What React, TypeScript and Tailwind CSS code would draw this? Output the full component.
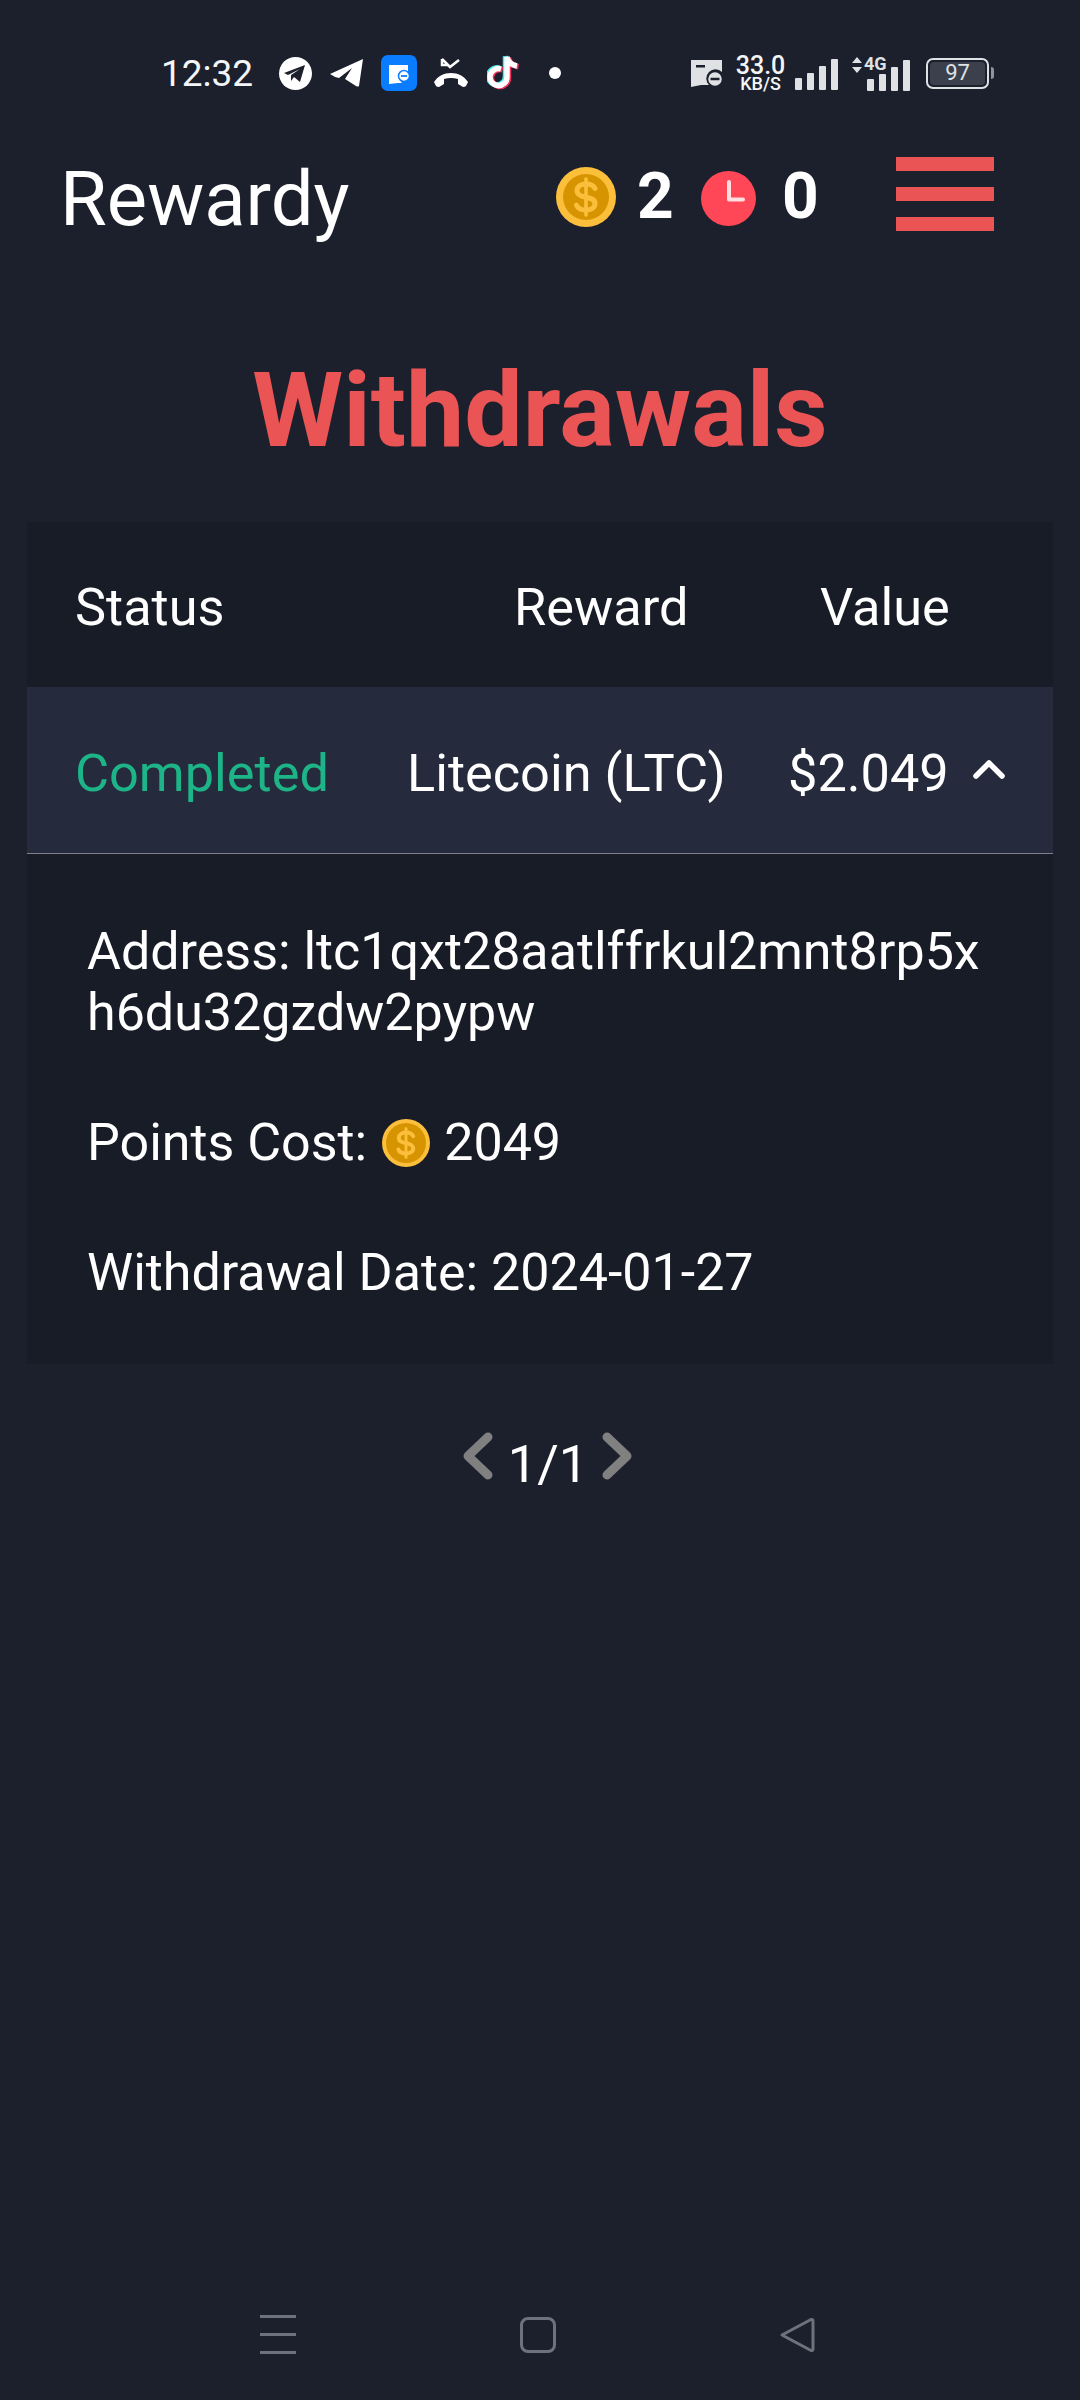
import React from "react";

const Coin = ({ size, ring = 7 }: { size: number; ring?: number }) => (
  <svg width={size} height={size} viewBox="0 0 60 60" className="shrink-0">
    <circle cx="30" cy="30" r="30" fill="#fbbf3c" />
    <circle cx="30" cy="30" r={30 - ring} fill="#d69500" />
    <path d="M39 21.500c-1.500-3-5-4.500-9-4.500-5 0-9 2.500-9 6.700 0 4.300 4 5.600 9 6.500 5 1 9 2.200 9 6.400 0 4.300-4 6.400-9 6.400-4.300 0-8-1.600-9.500-4.800" fill="none" stroke="#fbbf3c" strokeWidth="5" strokeLinecap="round" />
    <path d="M30 12v36" stroke="#fbbf3c" strokeWidth="3.600" strokeLinecap="round" />
  </svg>
);

const Clock = () => (
  <svg width="55" height="55" viewBox="0 0 55 55" className="shrink-0">
    <circle cx="27.500" cy="27.500" r="27.500" fill="#ff4757" />
    <path d="M28 11v17.500h14" fill="none" stroke="#ffdfe0" strokeWidth="4" strokeLinecap="round" strokeLinejoin="round" />
  </svg>
);

const StatusLeft = () => (
  <div className="flex items-center">
    <span className="text-[37px] leading-none text-[#f4f5f6] ml-[161px] w-[100px]">12:32</span>
    <svg width="33" height="33" viewBox="0 0 33 33" className="ml-[18px]">
      <circle cx="16.500" cy="16.500" r="16.500" fill="#fff" />
      <path d="M5 16 L26 8 L21 25 L15 20 L12 24 L12 18 L21 12 L9 18 Z" fill="#1c202d" />
    </svg>
    <svg width="33" height="28" viewBox="0 0 33 28" className="ml-[18px]">
      <path d="M0 15 L33 0 L29 27 Q28 28 26 27 L15 20 L22 9 L9 19 Q4 18 0 15 Z" fill="#fff" />
    </svg>
    <svg width="36" height="36" viewBox="0 0 36 36" className="ml-[18px]">
      <rect width="36" height="36" rx="7" fill="#0a7cff" />
      <path d="M8 10h19v8h-1a6 6 0 0 0-5 10l-4 0-9 1z" fill="#fff" />
      <circle cx="23" cy="21" r="5.500" fill="#fff" stroke="#0a7cff" strokeWidth="1.500" />
      <path d="M20 21h6" stroke="#0a7cff" strokeWidth="1.800" />
    </svg>
    <svg width="36" height="32" viewBox="0 0 36 32" className="ml-[16px]">
      <path d="M9 2l8 8 9-7" fill="none" stroke="#fff" strokeWidth="2.500" />
      <path d="M9 2v6h6" fill="none" stroke="#fff" strokeWidth="2.500" />
      <path d="M1 25c4-6 10-9 17-9s13 3 17 9l-2 4q-1 1-3 1l-5-3v-5q-7-2-14 0v5l-5 3q-2 0-3-1z" fill="#fff" />
    </svg>
    <svg width="32" height="36" viewBox="0 0 32 36" className="ml-[18px]">
      <g fill="none" strokeWidth="5.500">
        <path d="M14 14a8.500 8.500 0 1 0 6 8V2c1 5 4 8 10 9" stroke="#4de8ee" transform="translate(-1.500 -0.800)" />
        <path d="M14 14a8.500 8.500 0 1 0 6 8V2c1 5 4 8 10 9" stroke="#f5305a" transform="translate(1.500 0.800)" />
        <path d="M14 14a8.500 8.500 0 1 0 6 8V2c1 5 4 8 10 9" stroke="#fff" />
      </g>
    </svg>
    <span className="ml-[30px] w-[12px] h-[12px] rounded-full bg-white" />
  </div>
);

const Bars = () => (
  <svg width="43" height="31" viewBox="0 0 43 31" className="block">
    <rect x="0" y="19" width="7" height="12" rx="1" fill="#dfe1e4" />
    <rect x="12" y="14" width="7" height="17" rx="1" fill="#dfe1e4" />
    <rect x="24" y="7" width="7" height="24" rx="1" fill="#dfe1e4" />
    <rect x="36" y="0" width="7" height="31" rx="1" fill="#dfe1e4" />
  </svg>
);

const StatusRight = () => (
  <div className="flex items-center">
    <svg width="34" height="28" viewBox="0 0 34 28">
      <path d="M1 1h31v12a9 9 0 0 0-13 13l-8 0-10 2z" fill="#dfe1e4" />
      <rect x="6" y="6" width="9" height="2.500" fill="#1c202d" />
      <circle cx="25" cy="20" r="7.500" fill="#dfe1e4" stroke="#1c202d" strokeWidth="1.500" />
      <path d="M20.500 20h9" stroke="#1c202d" strokeWidth="2.500" />
    </svg>
    <div className="ml-[12px] w-[49px] flex flex-col items-center text-[#f4f5f6] font-medium">
      <span className="text-[25px] leading-[21px]">33.0</span>
      <span className="text-[18px] leading-[16px]">KB/S</span>
    </div>
    <div className="ml-[10px] mt-[3px] flex"><Bars /></div>
    <div className="ml-[13px] mt-[-1px] relative w-[59px] h-[33px]">
      <svg width="12" height="17" viewBox="0 0 12 17" className="absolute left-0 top-[1px]">
        <path d="M6 0l5 6H1zM6 16l5-6H1z" fill="#dfe1e4" />
      </svg>
      <div className="absolute left-[16px] top-[4px]"><Bars /></div>
      <span className="absolute left-[13px] top-[-1px] text-[18px] leading-[18px] font-bold text-[#dfe1e4] bg-[#1c202d] pr-[1px]">4G</span>
    </div>
    <div className="ml-[16px] w-[63px] h-[31px] rounded-[7px] border-[2px] border-[#dfe1e4] p-[2px]">
      <div className="h-full rounded-[4px] bg-[#3c404d] flex items-center justify-center text-[22px] leading-none text-[#dfe1e4]">97</div>
    </div>
    <span className="ml-[2px] w-[3px] h-[12px] rounded-r-sm bg-[#8f939b]" />
  </div>
);

const Cell = ({ children, className }: { children: React.ReactNode; className: string }) => (
  <span className={`absolute top-1/2 -translate-y-1/2 whitespace-nowrap ${className}`}>{children}</span>
);

export default function App() {
  return (
    <div className="relative w-[1080px] h-[2400px] bg-[#1c202d] text-white overflow-hidden flex flex-col" style={{ fontFamily: "Roboto, sans-serif" }}>
      <div className="h-[51px] shrink-0" />
      <div className="h-[44px] shrink-0 pr-[86px] flex items-center justify-between">
        <StatusLeft />
        <StatusRight />
      </div>
      <header className="h-[206px] shrink-0 flex items-center pl-[60px]">
        <span className="text-[76px] leading-none w-[496px] mt-[1px]">Rewardy</span>
        <span className="mt-[-3px]"><Coin size={60} /></span>
        <span className="ml-[21px] w-[37px] text-[64px] leading-none font-bold mt-[-3px]">2</span>
        <span className="ml-[27px] mt-[1px]"><Clock /></span>
        <span className="ml-[26px] w-[36px] text-[64px] leading-none font-bold mt-[-3px]">0</span>
        <div className="ml-[78px] flex flex-col gap-[16px] mt-[-9px]">
          <span className="block w-[98px] h-[14px] bg-[#ea5455]" />
          <span className="block w-[98px] h-[14px] bg-[#ea5455]" />
          <span className="block w-[98px] h-[14px] bg-[#ea5455]" />
        </div>
      </header>
      <h1 className="mt-[54px] h-[112px] text-center text-[104px] leading-[112px] font-bold text-[#ea5455]">Withdrawals</h1>
      <section className="mt-[55px] mx-[27px] bg-[#181c27] text-[52.3px]">
        <div className="relative h-[165px] pt-[3px]">
          <Cell className="left-[48px] mt-[2px]">Status</Cell>
          <Cell className="left-[487px] mt-[2px]">Reward</Cell>
          <Cell className="left-[793px] mt-[2px]">Value</Cell>
        </div>
        <div className="relative h-[167px] bg-[#252a3d] border-b-[1px] border-[#7c7f8a]">
          <Cell className="left-[48px] mt-[3px] text-[#1db587]">Completed</Cell>
          <Cell className="left-[380px] mt-[3px]">Litecoin (LTC)</Cell>
          <Cell className="left-[761px] mt-[3px]">$2.049</Cell>
          <svg width="32" height="20" viewBox="0 0 32 20" className="absolute left-[946px] top-[72px]">
            <path d="M3 17L16 4l13 13" fill="none" stroke="#fff" strokeWidth="5.500" strokeLinecap="round" strokeLinejoin="round" />
          </svg>
        </div>
        <div className="pl-[60px] pr-[60px] pt-[67px] pb-[61px] text-[52px]">
          <p className="leading-[61px] break-all">Address: ltc1qxt28aatlffrkul2mnt8rp5xh6du32gzdw2pypw</p>
          <p className="mt-[69px] leading-[61px] flex items-center">
            <span>Points Cost:</span>
            <span className="ml-[15px]"><Coin size={48} ring={5} /></span>
            <span className="ml-[14px]">2049</span>
          </p>
          <p className="mt-[69px] leading-[61px]">Withdrawal Date: 2024-01-27</p>
        </div>
      </section>
      <nav className="mt-[68px] flex items-start justify-center text-[52.3px] leading-none pl-[15px]">
        <svg width="32" height="48" viewBox="0 0 32 48" className="mr-[14px]">
          <path d="M26 5L6 24l20 19" fill="none" stroke="#808080" strokeWidth="9" strokeLinecap="round" strokeLinejoin="round" />
        </svg>
        <span className="mt-[6px]">1/1</span>
        <svg width="32" height="48" viewBox="0 0 32 48" className="ml-[13px]">
          <path d="M6 5l20 19L6 43" fill="none" stroke="#808080" strokeWidth="9" strokeLinecap="round" strokeLinejoin="round" />
        </svg>
      </nav>
      <footer className="absolute bottom-[46px] left-0 right-0 flex items-center justify-between pl-[260px] pr-[265px]">
        <div className="flex flex-col gap-[15px]">
          <span className="block w-[36px] h-[3px] bg-[#6f727c]" />
          <span className="block w-[36px] h-[3px] bg-[#6f727c]" />
          <span className="block w-[36px] h-[3px] bg-[#6f727c]" />
        </div>
        <span className="block w-[36px] h-[36px] rounded-[8px] border-[3px] border-[#6f727c]" />
        <svg width="36" height="36" viewBox="0 0 36 36">
          <path d="M3 18L32 2.500q2-.500 2 1.500v28q0 2-2 1.500z" fill="none" stroke="#6f727c" strokeWidth="3" strokeLinejoin="round" />
        </svg>
      </footer>
    </div>
  );
}
